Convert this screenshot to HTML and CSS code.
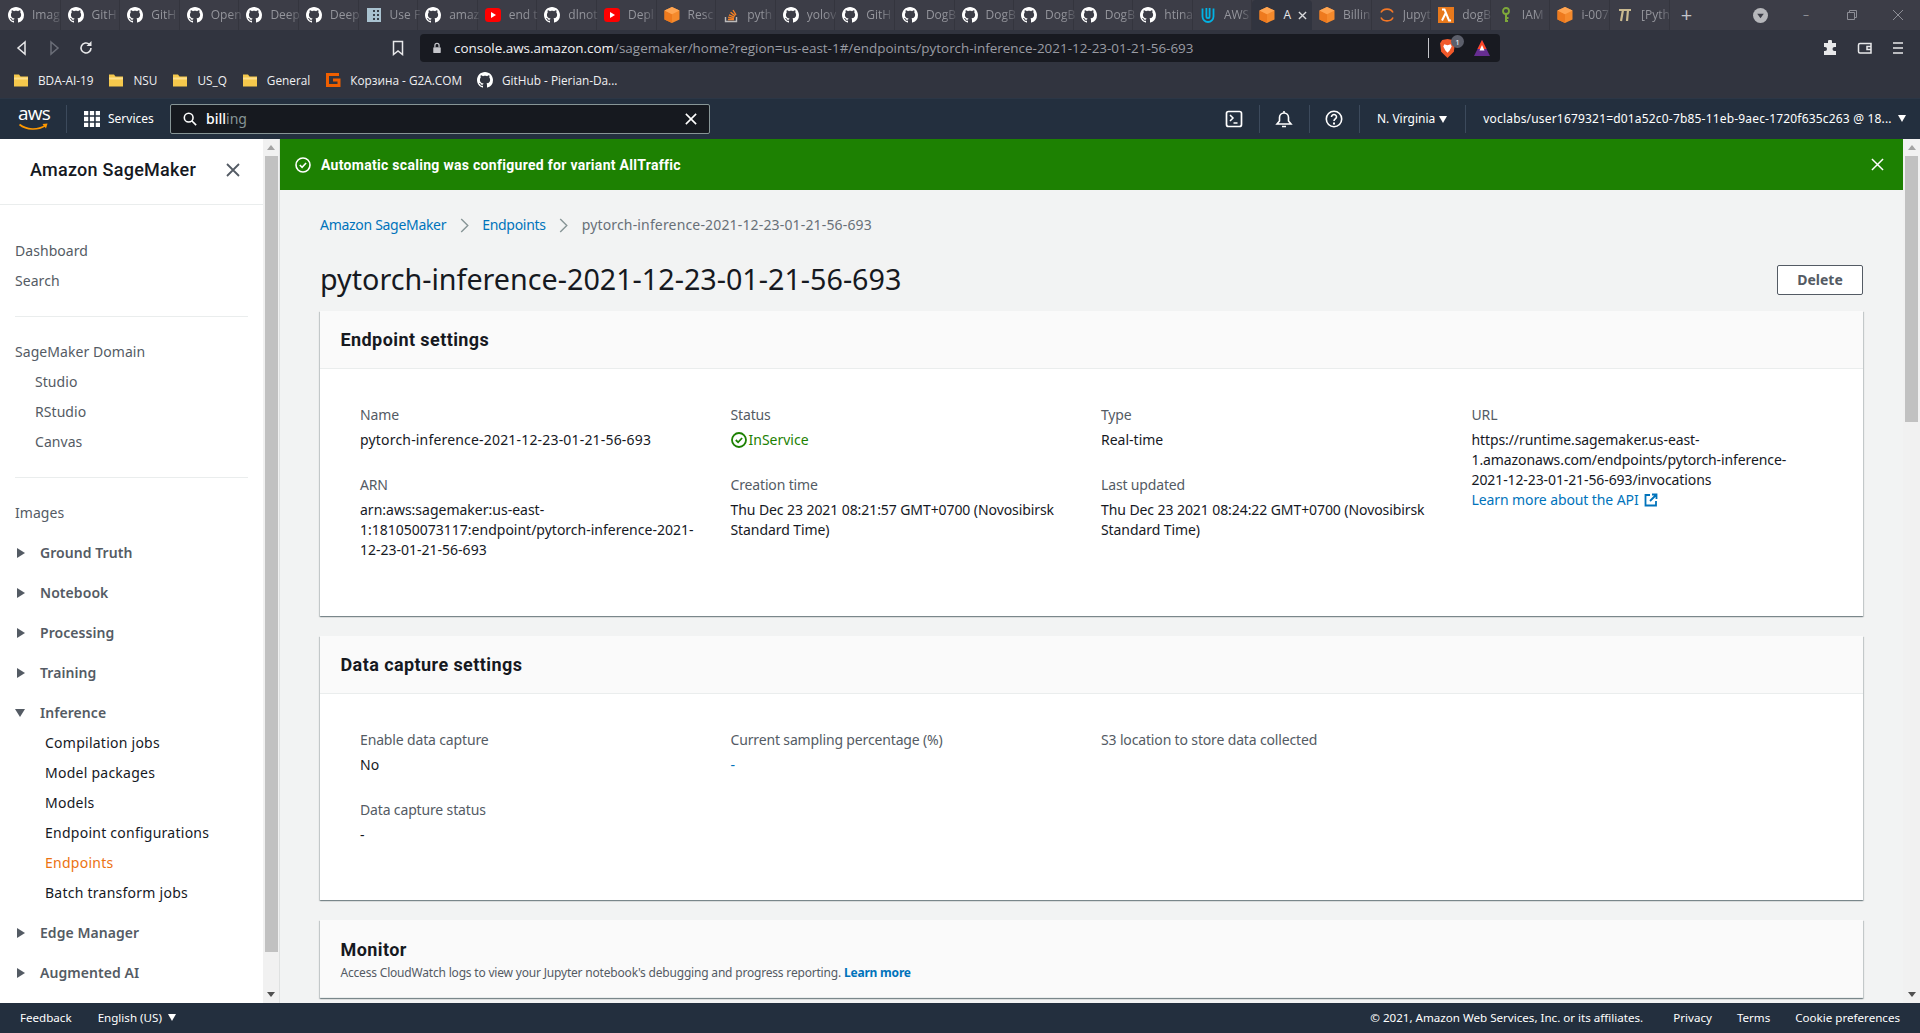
FILE: index.html
```html
<!DOCTYPE html>
<html lang="en">
<head>
  <meta charset="UTF-8" />
  <title>Amazon SageMaker</title>
  <link rel="stylesheet" href="styles.css">
</head>
<body>

  <svg class="defs" width="0" height="0">
    <symbol id="gh" viewBox="0 0 16 16"><path fill="#fff" d="M8 0C3.58 0 0 3.58 0 8c0 3.54 2.29 6.53 5.47 7.59.4.07.55-.17.55-.38 0-.19-.01-.82-.01-1.49-2.01.37-2.53-.49-2.69-.94-.09-.23-.48-.94-.82-1.13-.28-.15-.68-.52-.01-.53.63-.01 1.08.58 1.23.82.72 1.21 1.87.87 2.33.66.07-.52.28-.87.51-1.07-1.78-.2-3.64-.89-3.64-3.95 0-.87.31-1.59.82-2.15-.08-.2-.36-1.02.08-2.12 0 0 .67-.21 2.2.82.64-.18 1.32-.27 2-.27.68 0 1.36.09 2 .27 1.53-1.04 2.2-.82 2.2-.82.44 1.1.16 1.92.08 2.12.51.56.82 1.27.82 2.15 0 3.07-1.87 3.75-3.65 3.95.29.25.54.73.54 1.48 0 1.07-.01 1.93-.01 2.2 0 .21.15.46.55.38A8.013 8.013 0 0016 8c0-4.42-3.58-8-8-8z"/></symbol>
    <symbol id="cube" viewBox="0 0 16 16"><path fill="#f58a2c" d="M8 0l7.500 3.600v8.800L8 16 .5 12.400V3.600z"/><path fill="#ee7a1e" d="M.5 3.600L8 7.200V16L.5 12.400z"/><path fill="#ffa552" d="M8 0l7.500 3.600L8 7.200 .5 3.600z"/></symbol>
    <symbol id="yt" viewBox="0 0 16 16"><rect x="0" y="1" width="16" height="14" rx="3.5" fill="#f00"/><path fill="#fff" d="M6 5l5 3-5 3z"/></symbol>
    <symbol id="folder" viewBox="0 0 16 16"><path fill="#f5c84c" d="M1 2.5h5l1.5 2H15v10H1z"/><path fill="#ffe08a" d="M1 5.5h14v2H1z"/></symbol>
  </svg>

  <div class="tabstrip">
    <div class="tab"><svg class="ico"><use href="#gh"/></svg><span class="tab-t">Imag</span></div>
    <div class="tab"><svg class="ico"><use href="#gh"/></svg><span class="tab-t">GitH</span></div>
    <div class="tab"><svg class="ico"><use href="#gh"/></svg><span class="tab-t">GitH</span></div>
    <div class="tab"><svg class="ico"><use href="#gh"/></svg><span class="tab-t">Open</span></div>
    <div class="tab"><svg class="ico"><use href="#gh"/></svg><span class="tab-t">Deep</span></div>
    <div class="tab"><svg class="ico"><use href="#gh"/></svg><span class="tab-t">Deep</span></div>
    <div class="tab"><svg class="ico" viewBox="0 0 16 16"><rect x="1" y="1" width="14" height="14" fill="#a9c2d0"/><path fill="#39404a" d="M7 3h2v2H7zM11 3h2v2h-2zM7 7h2v2H7zM11 7h2v2h-2zM7 11h2v2H7zM11 11h2v2h-2z"/></svg><span class="tab-t">Use F</span></div>
    <div class="tab"><svg class="ico"><use href="#gh"/></svg><span class="tab-t">amaz</span></div>
    <div class="tab"><svg class="ico"><use href="#yt"/></svg><span class="tab-t">end t</span></div>
    <div class="tab"><svg class="ico"><use href="#gh"/></svg><span class="tab-t">dlnot</span></div>
    <div class="tab"><svg class="ico"><use href="#yt"/></svg><span class="tab-t">Depl</span></div>
    <div class="tab"><svg class="ico"><use href="#cube"/></svg><span class="tab-t">Resc</span></div>
    <div class="tab"><svg class="ico" viewBox="0 0 16 16"><path fill="none" stroke="#bcbbbb" stroke-width="1.4" d="M2.5 10v4.5h11V10"/><path fill="none" stroke="#f48024" stroke-width="1.4" d="M5 12.5h6M5.2 10.3l5.8 1.1M6 7.8l5.4 2.4M7.6 5.3l4.6 3.6M10 3l3 4.8"/></svg><span class="tab-t">pyth</span></div>
    <div class="tab"><svg class="ico"><use href="#gh"/></svg><span class="tab-t">yolov</span></div>
    <div class="tab"><svg class="ico"><use href="#gh"/></svg><span class="tab-t">GitH</span></div>
    <div class="tab"><svg class="ico"><use href="#gh"/></svg><span class="tab-t">DogB</span></div>
    <div class="tab"><svg class="ico"><use href="#gh"/></svg><span class="tab-t">DogB</span></div>
    <div class="tab"><svg class="ico"><use href="#gh"/></svg><span class="tab-t">DogB</span></div>
    <div class="tab"><svg class="ico"><use href="#gh"/></svg><span class="tab-t">DogB</span></div>
    <div class="tab"><svg class="ico"><use href="#gh"/></svg><span class="tab-t">htina</span></div>
    <div class="tab"><svg class="ico" viewBox="0 0 16 16"><path fill="none" stroke="#02b3e4" stroke-width="1.8" d="M2.5 1.5v8a5.5 5.5 0 0011 0v-8M6.4 1v8.5a1.6 1.6 0 003.2 0V1"/></svg><span class="tab-t">AWS</span></div>
    <div class="tab tab-on"><svg class="ico"><use href="#cube"/></svg><span class="tab-t">A</span><svg class="tab-x" viewBox="0 0 10 10"><path stroke="#d8d9dc" stroke-width="1.500" d="M1 1l8 8M9 1L1 9"/></svg></div>
    <div class="tab"><svg class="ico"><use href="#cube"/></svg><span class="tab-t">Billin</span></div>
    <div class="tab"><svg class="ico" viewBox="0 0 16 16"><path fill="none" stroke="#f37726" stroke-width="1.6" d="M2 5.5C4 1 12 1 14 5.5M2 10.5C4 15 12 15 14 10.5"/></svg><span class="tab-t">Jupyt</span></div>
    <div class="tab"><svg class="ico" viewBox="0 0 16 16"><rect width="16" height="16" fill="#e8791c"/><path fill="none" stroke="#fff" stroke-width="2" d="M4 2.500h2.500l4.500 11h2M7.500 6.500L4 13.500"/></svg><span class="tab-t">dogB</span></div>
    <div class="tab"><svg class="ico" viewBox="0 0 16 16"><circle cx="8" cy="4" r="3" fill="none" stroke="#7ea83a" stroke-width="1.8"/><path fill="none" stroke="#7ea83a" stroke-width="2" d="M8 7v8M8 11h2.5M8 14h2"/></svg><span class="tab-t">IAM</span></div>
    <div class="tab"><svg class="ico"><use href="#cube"/></svg><span class="tab-t">i-007</span></div>
    <div class="tab"><svg class="ico" viewBox="0 0 16 16"><path fill="none" stroke="#c9b990" stroke-width="2.2" d="M2 3h12M6 3L4 14M11 3l-1 11"/></svg><span class="tab-t">[Pyth</span></div>
    <span class="tab-plus">+</span>
    <div class="win-btns">
      <svg class="win-drop" viewBox="0 0 16 16"><circle cx="8" cy="8" r="8" fill="#b6b7bb"/><path fill="#3c3d47" d="M4.5 6h7L8 11z"/></svg>
      <span class="win-b">–</span>
      <svg class="win-r" viewBox="0 0 12 12"><path fill="none" stroke="#8d8e96" d="M1.5 3.5h7v7h-7zM3.5 3.5v-2h7v7h-2"/></svg>
      <svg class="win-r" viewBox="0 0 12 12"><path fill="none" stroke="#8d8e96" d="M1 1l10 10M11 1L1 11"/></svg>
    </div>
  </div>

  <div class="toolbar">
    <svg class="tb-ico tb-back" viewBox="0 0 16 16"><path fill="none" stroke="#e8e8ea" stroke-width="1.5" d="M11 2L4 8l7 6z"/></svg>
    <svg class="tb-ico tb-fwd" viewBox="0 0 16 16"><path fill="none" stroke="#6b6e78" stroke-width="1.5" d="M5 2l7 6-7 6z"/></svg>
    <svg class="tb-ico tb-reload" viewBox="0 0 16 16"><path fill="none" stroke="#e8e8ea" stroke-width="1.6" d="M13 8a5 5 0 11-1.6-3.7"/><path fill="#e8e8ea" d="M13.5 1v5h-5z"/></svg>
    <svg class="tb-ico tb-mark" viewBox="0 0 16 16"><path fill="none" stroke="#e8e8ea" stroke-width="1.5" d="M3.5 1.5h9v13L8 11l-4.500 3.500z"/></svg>
    <div class="addr">
      <svg class="lock" viewBox="0 0 12 14"><path fill="none" stroke="#c5c6cb" stroke-width="1.500" d="M3.500 6V4a2.500 2.500 0 015 0v2"/><rect x="1.500" y="6" width="9" height="7" rx="1" fill="#c5c6cb"/></svg>
      <span class="url"><b>console.aws.amazon.com</b>/sagemaker/home?region=us-east-1#/endpoints/pytorch-inference-2021-12-23-01-21-56-693</span>
      <span class="addr-sep"></span>
      <span class="shield">
        <svg class="shield-i" viewBox="0 0 16 18"><path fill="#f1592a" d="M8 0l5 1 2 3-1 8-6 6-6-6-1-8 2-3z"/><path fill="#fff" d="M5 5l3 1 3-1 1 2-2 4-2 2-2-2-2-4z"/></svg>
        <span class="shield-n">1</span>
      </span>
      <svg class="bat" viewBox="0 0 18 18"><path fill="#662d91" d="M9 1l8 16H1z"/><path fill="#ff4724" d="M9 1l4.500 9h-9z"/><path fill="#fff" d="M9 6l2.500 5.500h-5z"/></svg>
    </div>
    <svg class="tb-ico tb-puzzle" viewBox="0 0 16 16"><path fill="#e8e8ea" d="M6 1.500a2 2 0 014 0V3h4v4h-1.500a2 2 0 000 4H14v4H2v-4h1a2 2 0 000-4H2V3h4z"/></svg>
    <svg class="tb-ico tb-wallet" viewBox="0 0 16 16"><path fill="none" stroke="#e8e8ea" stroke-width="1.500" d="M14 3.500H3a1.500 1.500 0 00-1.500 1.500v6.500A1.500 1.500 0 003 13h11zM14 6.500h-4v3h4"/></svg>
    <svg class="tb-ico tb-menu" viewBox="0 0 16 16"><path stroke="#e8e8ea" stroke-width="1.500" d="M3 3h10M3 8h10M3 13h10"/></svg>
  </div>

  <div class="bookmarks">
    <span class="bm"><svg class="ico"><use href="#folder"/></svg>BDA-AI-19</span>
    <span class="bm"><svg class="ico"><use href="#folder"/></svg>NSU</span>
    <span class="bm"><svg class="ico"><use href="#folder"/></svg>US_Q</span>
    <span class="bm"><svg class="ico"><use href="#folder"/></svg>General</span>
    <span class="bm"><svg class="ico" viewBox="0 0 16 16"><path fill="none" stroke="#f05f00" stroke-width="3" d="M14 2.500H2.500v11H14V8H8"/></svg>Корзина - G2A.COM</span>
    <span class="bm"><svg class="ico"><use href="#gh"/></svg>GitHub - Pierian-Da...</span>
  </div>

  <header class="awsnav">
    <div class="aws-logo">
      <span class="aws-word">aws</span>
      <svg class="aws-smile" viewBox="0 0 30 9"><path fill="none" stroke="#f90" stroke-width="1.600" d="M1 1.500c7 5.500 18 6 26 1"/><path fill="#f90" d="M24 1l5-.5-1.500 5z"/></svg>
    </div>
    <div class="services">
      <svg class="grid-i" viewBox="0 0 15 15"><path fill="#fff" d="M0 0h4v4H0zM5.500 0h4v4h-4zM11 0h4v4h-4zM0 5.500h4v4H0zM5.500 5.500h4v4h-4zM11 5.500h4v4h-4zM0 11h4v4H0zM5.500 11h4v4h-4zM11 11h4v4h-4z"/></svg>
      <span>Services</span>
    </div>
    <div class="search">
      <svg class="search-i" viewBox="0 0 16 16"><circle cx="6.500" cy="6.500" r="5" fill="none" stroke="#fff" stroke-width="1.800"/><path stroke="#fff" stroke-width="1.800" d="M10 10l5 5"/></svg>
      <span class="search-t"><b>bill</b>ing</span>
      <svg class="search-x" viewBox="0 0 14 14"><path stroke="#fff" stroke-width="1.800" d="M1 1l12 12M13 1L1 13"/></svg>
    </div>
    <div class="nav-right">
      <span class="nav-cell"><svg class="nav-i" viewBox="0 0 18 18"><rect x="1.500" y="1.500" width="15" height="15" rx="2" fill="none" stroke="#fff" stroke-width="1.700"/><path fill="none" stroke="#fff" stroke-width="1.500" d="M5 5l3 3-3 3M8.500 13h4"/></svg></span>
      <span class="nav-cell"><svg class="nav-i" viewBox="0 0 18 18"><path fill="none" stroke="#fff" stroke-width="1.600" d="M2 14h14l-2.500-3V7.500a4.500 4.500 0 00-9 0V11zM7 16.500h4M9 1v2"/></svg></span>
      <span class="nav-cell"><svg class="nav-i" viewBox="0 0 18 18"><circle cx="9" cy="9" r="7.700" fill="none" stroke="#fff" stroke-width="1.600"/><path fill="none" stroke="#fff" stroke-width="1.600" d="M6.500 7a2.500 2.500 0 115 0c0 1.800-2.500 2-2.500 4"/><path fill="#fff" d="M8 12.500h2v2H8z"/></svg></span>
      <span class="nav-cell nav-region">N. Virginia <i class="tri-d"></i></span>
      <span class="nav-user">voclabs/user1679321=d01a52c0-7b85-11eb-9aec-1720f635c263 @ 18... <i class="tri-d"></i></span>
    </div>
  </header>

  <div class="page">
    <aside class="side">
      <div class="side-head">
        <span class="side-title">Amazon SageMaker</span>
        <svg class="side-x" viewBox="0 0 14 14"><path stroke="#545b64" stroke-width="1.800" d="M1 1l12 12M13 1L1 13"/></svg>
      </div>
      <nav class="side-nav">
        <a class="item">Dashboard</a>
        <a class="item">Search</a>
        <hr class="side-hr">
        <a class="item">SageMaker Domain</a>
        <a class="item sub">Studio</a>
        <a class="item sub">RStudio</a>
        <a class="item sub">Canvas</a>
        <hr class="side-hr">
        <a class="item">Images</a>
        <a class="item group"><i class="caret"></i>Ground Truth</a>
        <a class="item group"><i class="caret"></i>Notebook</a>
        <a class="item group"><i class="caret"></i>Processing</a>
        <a class="item group"><i class="caret"></i>Training</a>
        <a class="item group"><i class="caret caret-open"></i>Inference</a>
        <a class="item sub2">Compilation jobs</a>
        <a class="item sub2">Model packages</a>
        <a class="item sub2">Models</a>
        <a class="item sub2">Endpoint configurations</a>
        <a class="item sub2 active">Endpoints</a>
        <a class="item sub2">Batch transform jobs</a>
        <a class="item group"><i class="caret"></i>Edge Manager</a>
        <a class="item group"><i class="caret"></i>Augmented AI</a>
      </nav>
    </aside>
    <div class="sbar sbar-side"><i class="arr-up"></i><i class="thumb thumb-side"></i><i class="arr-down"></i></div>

    <main class="main">
      <div class="flash">
        <svg class="flash-i" viewBox="0 0 16 16"><circle cx="8" cy="8" r="7" fill="none" stroke="#fff" stroke-width="1.600"/><path fill="none" stroke="#fff" stroke-width="1.600" d="M4.800 8l2.300 2.300 4-4.300"/></svg>
        <span class="flash-t">Automatic scaling was configured for variant AllTraffic</span>
        <svg class="flash-x" viewBox="0 0 14 14"><path stroke="#fff" stroke-width="1.600" d="M1 1l12 12M13 1L1 13"/></svg>
      </div>
      <div class="content">
        <div class="crumbs">
          <a class="link crumb-l">Amazon SageMaker</a>
          <svg class="chev" viewBox="0 0 9 16"><path fill="none" stroke="#879596" stroke-width="1.500" d="M1 1l7 7-7 7"/></svg>
          <a class="link crumb-l">Endpoints</a>
          <svg class="chev" viewBox="0 0 9 16"><path fill="none" stroke="#879596" stroke-width="1.500" d="M1 1l7 7-7 7"/></svg>
          <span class="crumb-now">pytorch-inference-2021-12-23-01-21-56-693</span>
        </div>
        <div class="title-row">
          <h1>pytorch-inference-2021-12-23-01-21-56-693</h1>
          <button class="btn">Delete</button>
        </div>

        <section class="card">
          <div class="card-head"><h2>Endpoint settings</h2></div>
          <div class="card-body card-body-1">
            <div class="field"><div class="lbl">Name</div><div class="val val-id">pytorch-inference-2021-12-23-01-21-56-693</div></div>
            <div class="field"><div class="lbl">Status</div><div class="val status"><svg class="ok-i" viewBox="0 0 16 16"><circle cx="8" cy="8" r="7" fill="none" stroke="#1d8102" stroke-width="1.800"/><path fill="none" stroke="#1d8102" stroke-width="1.800" d="M4.800 8l2.300 2.300 4-4.300"/></svg>InService</div></div>
            <div class="field"><div class="lbl">Type</div><div class="val">Real-time</div></div>
            <div class="field field-url"><div class="lbl">URL</div><div class="val val-url">https://runtime.sagemaker.us-east-<br>1.amazonaws.com/endpoints/pytorch-inference-<br>2021-12-23-01-21-56-693/invocations<br><a class="link">Learn more about the API <svg class="ext-i" viewBox="0 0 14 14"><path fill="none" stroke="#0073bb" stroke-width="1.800" d="M6 2H1.500v10.500H12V8M8 1.500h4.500V6M12.500 1.500L6 8"/></svg></a></div></div>
            <div class="field"><div class="lbl">ARN</div><div class="val">arn:aws:sagemaker:us-east-<br>1:181050073117:endpoint/pytorch-inference-2021-<br>12-23-01-21-56-693</div></div>
            <div class="field"><div class="lbl">Creation time</div><div class="val val-date">Thu Dec 23 2021 08:21:57 GMT+0700 (Novosibirsk<br>Standard Time)</div></div>
            <div class="field"><div class="lbl">Last updated</div><div class="val val-date">Thu Dec 23 2021 08:24:22 GMT+0700 (Novosibirsk<br>Standard Time)</div></div>
          </div>
        </section>

        <section class="card">
          <div class="card-head"><h2>Data capture settings</h2></div>
          <div class="card-body card-body-2">
            <div class="field"><div class="lbl">Enable data capture</div><div class="val">No</div></div>
            <div class="field"><div class="lbl">Current sampling percentage (%)</div><div class="val"><a class="link">-</a></div></div>
            <div class="field"><div class="lbl">S3 location to store data collected</div></div>
            <div class="field field-row2"><div class="lbl">Data capture status</div><div class="val">-</div></div>
          </div>
        </section>

        <section class="card">
          <div class="card-head card-head-sub">
            <h2>Monitor</h2>
            <p class="card-sub">Access CloudWatch logs to view your Jupyter notebook's debugging and progress reporting. <a class="link link-b">Learn more</a></p>
          </div>
        </section>
      </div>
    </main>
    <div class="sbar"><i class="arr-up"></i><i class="thumb thumb-main"></i><i class="arr-down"></i></div>
  </div>

  <footer class="foot">
    <a class="foot-l">Feedback</a>
    <a class="foot-l">English (US) <i class="tri-d"></i></a>
    <span class="foot-right">
      <span class="foot-copy">© 2021, Amazon Web Services, Inc. or its affiliates.</span>
      <a class="foot-l">Privacy</a>
      <a class="foot-l">Terms</a>
      <a class="foot-l">Cookie preferences</a>
    </span>
  </footer>

</body>
</html>
```

FILE: styles.css
```css
:root {
  --nav: #232f3e;
  --chrome: #31343f;
  --tabs: #3c3d47;
  --link: #0073bb;
  --ink: #16191f;
  --grey: #545b64;
  --line: #eaeded;
  --ui-font: 'Noto Sans', 'Liberation Sans', sans-serif;
  --head-font: 'Roboto', 'Liberation Sans', sans-serif;
  --chrome-font: 'Open Sans', 'Liberation Sans', sans-serif;
}

* {
  box-sizing: border-box;
}

html,
body {
  margin: 0;
  height: 100%;
  overflow: hidden;
}

body {
  display: flex;
  flex-direction: column;
  font-family: var(--ui-font);
  font-size: 14px;
  line-height: 20px;
  color: var(--ink);
  background-color: #f2f3f3;
}

.defs {
  position: absolute;
}

.ico {
  width: 16px;
  height: 16px;
  flex: none;
}

/* browser chrome */
.tabstrip {
  height: 30px;
  flex: none;
  display: flex;
  align-items: center;
  padding-left: 1px;
  background-color: var(--tabs);
  font-family: var(--chrome-font);
  font-size: 12px;
  color: #94959c;
}

.tab {
  width: 59.6px;
  height: 30px;
  flex: none;
  display: flex;
  align-items: center;
  gap: 8px;
  padding-left: 7px;
  border-right: 1px solid #34353e;
}

.tab-t {
  white-space: nowrap;
  -webkit-mask-image: linear-gradient(to right, #000 60%, rgba(0, 0, 0, 0.25));
  mask-image: linear-gradient(to right, #000 60%, rgba(0, 0, 0, 0.25));
}

.tab-on {
  background-color: var(--chrome);
  color: #e8e8ea;
  border-right: 0;
  border-radius: 4px 4px 0 0;
}

.tab-on .tab-t {
  -webkit-mask-image: none;
  mask-image: none;
}

.tab-x {
  width: 9px;
  height: 9px;
  flex: none;
  margin-left: -1px;
}

.tab-plus {
  margin-left: 11px;
  font-size: 20px;
  color: #c4c5ca;
}

.win-btns {
  margin-left: auto;
  display: flex;
  align-items: center;
  gap: 34px;
  padding-right: 16px;
  color: #8d8e96;
}

.win-drop {
  width: 15px;
  height: 15px;
  margin-right: -2px;
}

.win-b {
  width: 12px;
  text-align: center;
}

.win-r {
  width: 12px;
  height: 12px;
}

.toolbar {
  height: 36px;
  flex: none;
  display: flex;
  align-items: center;
  background-color: var(--chrome);
  padding-left: 14px;
}

.tb-ico {
  width: 16px;
  height: 16px;
  flex: none;
}

.tb-fwd { margin-left: 16px; }
.tb-reload { margin-left: 16px; }
.tb-mark { margin-left: 296px; }

.addr {
  width: 1080px;
  height: 28px;
  margin-left: 14px;
  flex: none;
  display: flex;
  align-items: center;
  padding-left: 12px;
  background-color: #181a21;
  border-radius: 4px;
  font-family: var(--chrome-font);
  font-size: 13.45px;
  color: #9a9ca4;
}

.lock {
  width: 10px;
  height: 12px;
  flex: none;
}

.url {
  margin-left: 12px;
  white-space: nowrap;
  width: 974px;
  flex: none;
}

.url b {
  font-weight: 400;
  color: #f2f2f4;
}

.addr-sep {
  width: 1px;
  height: 20px;
  flex: none;
  background-color: #c5c6cb;
}

.shield {
  position: relative;
  margin-left: 10px;
  display: flex;
}

.shield-i {
  width: 17px;
  height: 19px;
}

.shield-n {
  position: absolute;
  left: 12px;
  top: -4px;
  width: 13px;
  height: 13px;
  border-radius: 50%;
  background-color: #5c5f6b;
  color: #fff;
  font-size: 8px;
  line-height: 13px;
  text-align: center;
}

.bat {
  width: 18px;
  height: 18px;
  margin-left: 17px;
}

.tb-puzzle { margin-left: 322px; }
.tb-wallet { margin-left: 19px; }
.tb-menu { margin-left: 17px; }

.bookmarks {
  height: 32px;
  flex: none;
  display: flex;
  align-items: center;
  gap: 15px;
  padding: 0 0 4px 13px;
  background-color: var(--chrome);
  font-family: var(--chrome-font);
  font-size: 11.8px;
  color: #f0f0f2;
  white-space: nowrap;
}

.bm {
  display: flex;
  align-items: center;
  gap: 9px;
}

/* console top bar */
.awsnav {
  height: 41px;
  flex: none;
  display: flex;
  align-items: center;
  background-color: var(--nav);
  color: #fff;
  font-size: 12px;
  border-top: 1px solid #2b3646;
}

.aws-logo {
  width: 67px;
  height: 28px;
  flex: none;
  padding-left: 18px;
  border-right: 1px solid #3c4a5c;
  position: relative;
}

.aws-word {
  display: block;
  font-family: 'Open Sans', sans-serif;
  font-size: 19px;
  line-height: 17px;
  letter-spacing: -0.8px;
}

.aws-smile {
  position: absolute;
  left: 18px;
  top: 18px;
  width: 31px;
  height: 9px;
}

.services {
  width: 103px;
  flex: none;
  display: flex;
  align-items: center;
  gap: 8px;
  padding-left: 17px;
}

.grid-i {
  width: 16px;
  height: 16px;
}

.search {
  width: 540px;
  height: 30px;
  flex: none;
  display: flex;
  align-items: center;
  padding: 0 12px;
  background-color: #16191f;
  border: 1px solid #879596;
  border-radius: 2px;
  font-size: 14px;
  color: #879596;
}

.search-i {
  width: 14px;
  height: 14px;
}

.search-t {
  margin-left: 9px;
}

.search-t b {
  color: #fff;
  font-weight: 500;
}

.search-x {
  width: 12px;
  height: 12px;
  margin-left: auto;
}

.nav-right {
  margin-left: auto;
  display: flex;
  align-items: center;
  white-space: nowrap;
  padding-right: 14px;
}

.nav-cell {
  height: 28px;
  display: flex;
  align-items: center;
  padding: 0 15.5px;
  border-right: 1px solid #3c4a5c;
}

.nav-i {
  width: 18px;
  height: 18px;
}

.nav-region {
  gap: 1px;
  padding: 0 18px 0 17px;
}

.nav-user {
  padding-left: 17px;
  letter-spacing: 0.18px;
}

.tri-d {
  display: inline-block;
  width: 0;
  height: 0;
  margin-left: 3px;
  vertical-align: 1px;
  border-left: 4px solid transparent;
  border-right: 4px solid transparent;
  border-top: 7px solid currentColor;
}

/* layout */
.page {
  flex: 1;
  min-height: 0;
  display: flex;
}

.side {
  width: 263px;
  flex: none;
  background-color: #fff;
  overflow: hidden;
}

.side-head {
  height: 66px;
  display: flex;
  align-items: center;
  justify-content: space-between;
  padding: 0 23px 4px 30px;
  border-bottom: 1px solid var(--line);
}

.side-title {
  font-family: var(--head-font);
  font-size: 18px;
  font-weight: 500;
  letter-spacing: 0.26px;
  color: var(--ink);
}

.side-x {
  width: 14px;
  height: 14px;
}

.side-nav {
  display: flex;
  flex-direction: column;
  padding: 31px 15px 0;
}

.item {
  display: block;
  height: 30px;
  line-height: 30px;
  letter-spacing: 0.06px;
  color: var(--grey);
}

.sub {
  padding-left: 20px;
}

.sub2 {
  padding-left: 30px;
  letter-spacing: 0.25px;
  color: var(--ink);
}

.active {
  color: #ec7211;
}

.group {
  display: flex;
  align-items: center;
  margin-top: 10px;
  font-weight: 600;
  color: #545b64;
}

.caret {
  width: 0;
  height: 0;
  margin-right: 15px;
  margin-left: 2px;
  border-top: 5px solid transparent;
  border-bottom: 5px solid transparent;
  border-left: 8px solid var(--grey);
}

.caret-open {
  margin-left: 0;
  margin-right: 15px;
  border-left: 5px solid transparent;
  border-right: 5px solid transparent;
  border-top: 8px solid var(--grey);
  border-bottom: 0;
}

.side-hr {
  width: 233px;
  margin: 20px 0;
  border: 0;
  border-top: 1px solid var(--line);
}

.sbar {
  width: 17px;
  flex: none;
  display: flex;
  flex-direction: column;
  align-items: center;
  background-color: #f1f1f1;
}

.sbar-side {
  border-right: 1px solid #dfe1e1;
}

.arr-up,
.arr-down {
  width: 0;
  height: 0;
  flex: none;
  margin: 6px 0;
  border-left: 4px solid transparent;
  border-right: 4px solid transparent;
}

.arr-up {
  border-bottom: 5px solid #a3a3a3;
}

.arr-down {
  margin-top: auto;
  border-top: 5px solid #505050;
}

.thumb {
  width: 13px;
  flex: none;
  background-color: #c1c1c1;
}

.thumb-side { height: 796px; }
.thumb-main { height: 266px; }

.main {
  flex: 1;
  min-width: 0;
  overflow: hidden;
  background-color: #f2f3f3;
}

.flash {
  height: 51px;
  display: flex;
  align-items: center;
  padding: 0 19px 0 15px;
  background-color: #1d8102;
  color: #fff;
}

.flash-i {
  width: 16px;
  height: 16px;
}

.flash-t {
  margin-left: 10px;
  font-family: var(--head-font);
  font-weight: 700;
  letter-spacing: 0.29px;
}

.flash-x {
  width: 13px;
  height: 13px;
  margin-left: auto;
}

.content {
  padding: 25px 40px 0;
}

.crumbs {
  display: flex;
  align-items: center;
  height: 20px;
}

.link {
  color: var(--link);
}

.link-b {
  font-weight: 700;
}

.crumb-l {
  letter-spacing: -0.3px;
}

.chev {
  width: 9px;
  height: 15px;
  margin: 0 13.5px;
}

.crumb-now {
  letter-spacing: 0.16px;
  color: #687078;
}

.title-row {
  margin-top: 30px;
  height: 30px;
  display: flex;
  align-items: center;
  justify-content: space-between;
}

h1 {
  margin: 0;
  padding-bottom: 2px;
  font-size: 28.7px;
  font-weight: 400;
  line-height: 36px;
  color: var(--ink);
}

.btn {
  width: 86px;
  height: 30px;
  padding: 0 0 2px;
  border: 1px solid #545b64;
  border-radius: 2px;
  background-color: #fff;
  font-family: var(--ui-font);
  font-size: 14px;
  font-weight: 700;
  color: var(--grey);
}

.card {
  margin-top: 16px;
  background-color: #fff;
  box-shadow: 0 1px 1px 0 rgba(0, 28, 36, 0.3), 1px 1px 1px 0 rgba(0, 28, 36, 0.15), -1px 1px 1px 0 rgba(0, 28, 36, 0.15);
}

.card + .card {
  margin-top: 20px;
}

.card-head {
  height: 58px;
  display: flex;
  align-items: center;
  padding-left: 20.5px;
  background-color: #fafafa;
  border-bottom: 1px solid var(--line);
}

.card-head-sub {
  display: block;
  padding-top: 19px;
  height: 78px;
}

h2 {
  margin: 0;
  font-family: var(--head-font);
  font-size: 18px;
  font-weight: 700;
  letter-spacing: 0.42px;
  line-height: 22px;
  color: var(--ink);
}

.card-sub {
  margin: 4px 0 0;
  font-size: 12px;
  line-height: 16px;
  letter-spacing: -0.19px;
  color: var(--grey);
}

.card-body {
  display: grid;
  grid-template-columns: repeat(4, 370.5px);
  row-gap: 25px;
  align-content: start;
  padding: 36px 0 0 40px;
}

.card-body-1 { height: 247px; }
.card-body-2 { height: 206px; }

.field-url {
  grid-row: span 2;
}

.field-row2 {
  grid-column: 1;
}

.lbl {
  margin-bottom: 5px;
  letter-spacing: -0.15px;
  color: var(--grey);
}

.val-id {
  letter-spacing: 0.18px;
}

.val-url {
  letter-spacing: -0.1px;
}

.val-date {
  letter-spacing: -0.08px;
}

.status {
  display: flex;
  align-items: center;
  gap: 2px;
  color: #1d8102;
}

.ok-i {
  width: 16px;
  height: 16px;
}

.ext-i {
  width: 14px;
  height: 14px;
  margin-left: 2px;
  vertical-align: -2px;
}

/* footer */
.foot {
  height: 30px;
  flex: none;
  display: flex;
  align-items: center;
  gap: 26px;
  padding: 0 20px;
  background-color: var(--nav);
  color: #fff;
  font-size: 11.6px;
  white-space: nowrap;
}

.foot-right {
  margin-left: auto;
  display: flex;
  gap: 25px;
}

.foot-copy {
  margin-right: 5px;
}
```
